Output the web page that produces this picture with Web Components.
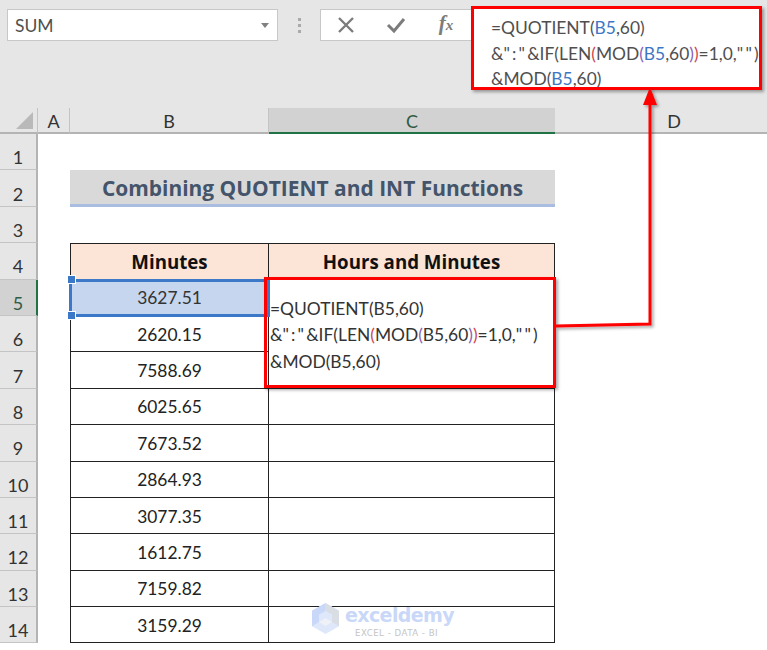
<!DOCTYPE html>
<html>
<head>
<meta charset="utf-8">
<style>
  html, body { margin: 0; height: 100%; overflow: hidden; background: #fff; }
  body { font-family: Lato, "Open Sans", sans-serif; color: #222; }
</style>
</head>
<body>
<xl-app>
  <xl-formula-bar name="SUM"></xl-formula-bar>
  <xl-sheet></xl-sheet>
</xl-app>

<script>
const formulaLines = `
<span><span>=QUOTIENT(</span><b class="ref">B5</b><span>,60)</span></span>
<span><span>&amp;<u>":"</u>&amp;IF(LEN</span><b class="p1">(</b><span>MOD</span><b class="p2">(</b><b class="ref">B5</b><span>,60</span><b class="p2">)</b><b class="p1">)</b><span>=1,0,<u>""</u>)</span></span>
<span><span>&amp;MOD(</span><b class="ref">B5</b><span>,60)</span></span>
`

const appTemplate = document.createElement('template')
appTemplate.innerHTML = `
<style>
  :host { display: block; width: 767px; height: 650px; overflow: hidden; position: relative; }
</style>
<slot></slot>
`

/**
 * Outer frame of the window.
 */
class XlApp extends HTMLElement {
  constructor () {
    super()
    this.attachShadow({ mode: 'open' })
    this.shadowRoot.appendChild(appTemplate.content.cloneNode(true))
  }
}

const barTemplate = document.createElement('template')
barTemplate.innerHTML = `
<style>
  :host {
    display: flex; align-items: flex-start; height: 108px; box-sizing: border-box;
    padding: 9px 0 0 7px; background: #e6e6e6; position: relative;
  }
  .namebox {
    width: 271px; height: 32px; box-sizing: border-box; background: #fff; border: 1px solid #c8c8c8;
    display: flex; align-items: center; justify-content: space-between; padding: 0 8px 0 7px;
    font-size: 17.5px; color: #4f4f4f;
  }
  .caret { width: 0; height: 0; border: 4px solid transparent; border-top: 5px solid #808080; border-bottom: 0; }
  .dots { width: 42px; display: flex; flex-direction: column; align-items: center; gap: 3px; padding-top: 9px; }
  .dots i { width: 3px; height: 3px; background: #aaa; }
  .buttons {
    width: 152px; height: 32px; box-sizing: border-box; background: #fff; border: 1px solid #c8c8c8; border-right: 0;
    display: flex; align-items: center; gap: 30px; padding-left: 15px;
  }
  .buttons svg { display: block; width: 20px; height: 20px; }
  .fx { font: italic 700 21px/20px "Liberation Serif", serif; color: #7c7c7c; width: 20px; text-align: center; margin-top: -2px; }
  .fx small { font-size: 15px; }
  .formula {
    width: 288px; height: 82px; box-sizing: border-box; margin-top: -1px; background: #fff; padding: 7px 0 0 19px;
    display: flex; flex-direction: column; font-size: 17.4px; line-height: 25.6px; color: #4f4f4f; position: relative;
  }
  #lines > span { white-space: nowrap; display: block; }
  .formula b { font-weight: 400; }
  u { text-decoration: none; letter-spacing: 2.2px; }
  .ref { color: #3d77c4; }
  .p1 { color: #d0454f; }
  .p2 { color: #8a5fb8; }
  .outline {
    position: absolute; left: -1px; top: -2px; right: -2px; bottom: 0; border: 3px solid #f00;
    box-shadow: 2px 2px 3px rgba(0, 0, 0, .35);
  }
</style>
<div class="namebox"><span id="name"></span><i class="caret"></i></div>
<div class="dots"><i></i><i></i><i></i></div>
<div class="buttons">
  <svg viewBox="0 0 20 20"><path d="M3 3 L17 17 M17 3 L3 17" stroke="#7c7c7c" stroke-width="2.4" fill="none"/></svg>
  <svg viewBox="0 0 20 20"><path d="M2 10 L8 16 L18 4" stroke="#7c7c7c" stroke-width="3" fill="none"/></svg>
  <span class="fx">f<small>x</small></span>
</div>
<div class="formula"><div id="lines" style="display:contents"></div><div class="outline"></div></div>
`

/**
 * Name box, buttons and the expanded formula field with its red outline.
 */
class XlFormulaBar extends HTMLElement {
  constructor () {
    super()
    this.attachShadow({ mode: 'open' })
    this.shadowRoot.appendChild(barTemplate.content.cloneNode(true))
  }

  connectedCallback () {
    this.shadowRoot.querySelector('#name').textContent = this.getAttribute('name')
    this.shadowRoot.querySelector('#lines').innerHTML = formulaLines
  }
}

const sheetTemplate = document.createElement('template')
sheetTemplate.innerHTML = `
<style>
  :host {
    display: grid; position: relative; height: 542px; background: #fff;
    grid-template-columns: 38px 32px 199px 286px 238px;
    grid-template-rows: 26px repeat(14, 36.4px);
    font-size: 17.4px; color: #222;
  }
  .col, .row {
    background: #e6e6e6; display: flex; align-items: center; justify-content: center;
    box-sizing: border-box; font-size: 18px; color: #333;
  }
  .col { border-right: 1px solid #c4c4c4; border-bottom: 2px solid #b4b4b4; padding-top: 2px; }
  .col.on { background: #d2d2d2; border-bottom: 2px solid #217346; color: #2f5b45; border-right: 0; }
  .row { grid-column: 1; border-bottom: 1px solid #c4c4c4; border-right: 2px solid #b4b4b4; font-size: 18px; padding-top: 11px; }
  .row.on { background: #d2d2d2; border-right: 2px solid #217346; color: #2f5b45; }
  .corner { background: #e6e6e6; border-right: 1px solid #c4c4c4; border-bottom: 2px solid #b4b4b4; box-sizing: border-box; position: relative; }
  .corner::after {
    content: ''; position: absolute; right: 4px; bottom: 3px; width: 0; height: 0;
    border-left: 17px solid transparent; border-bottom: 17px solid #b9b9b9;
  }
  .title {
    grid-column: 3 / 5; grid-row: 3; background: #d9d9d9; border-bottom: 3px solid #a9bde0;
    box-sizing: border-box; display: flex; align-items: center; justify-content: center; padding-top: 1px;
    font-family: "Open Sans", sans-serif; font-weight: 700; font-size: 20.95px; color: #44546a;
  }
  .cell {
    box-sizing: border-box; display: flex; align-items: center; justify-content: center;
    border-right: 1.5px solid #222; border-bottom: 1.5px solid #222; padding-top: 1px;
  }
  .cell.b { grid-column: 3; border-left: 1.5px solid #222; }
  .cell.c { grid-column: 4; }
  .cell.top { border-top: 1.5px solid #222; }
  .head { background: #fce4d6; font-family: "Open Sans", sans-serif; font-weight: 700; font-size: 18.7px; color: #111; }
  .sel { background: #c6d6ee; outline: 3px solid #3c78c8; outline-offset: -2px; border-color: transparent; position: relative; color: #333; }
  .sel i { position: absolute; left: -4px; width: 7px; height: 7px; background: #3c78c8; border: 1px solid #fff; z-index: 2; }
  .sel i.t { top: -5px; }
  .sel i.u { bottom: -5px; }
  .merged {
    grid-column: 4; grid-row: 6 / 9; align-items: flex-start; flex-direction: column; justify-content: center;
    font-size: 17.4px; line-height: 26.4px; padding: 4px 0 0 1px; position: relative; color: #333;
    border-right: 1.5px solid #222; border-bottom: 1.5px solid #222; box-sizing: border-box; display: flex;
  }
  .merged > span { white-space: nowrap; display: block; }
  .merged b { font-weight: 400; }
  u { text-decoration: none; letter-spacing: 2.2px; }
  .p1 { color: #d0454f; }
  .p2 { color: #8a5fb8; }
  .outline {
    position: absolute; left: -5px; right: -2px; top: -3px; bottom: 0; border: 3px solid #f00; z-index: 3;
    box-shadow: 2px 2px 3px rgba(0, 0, 0, .35);
  }
  .arrow { position: absolute; left: 540px; top: -30px; width: 130px; z-index: 4; height: 270px; }
  .mark { position: absolute; left: 312px; top: 495px; display: flex; gap: 6px; align-items: flex-start; z-index: 1; pointer-events: none; }
  .mark svg { width: 27px; height: 31px; display: block; }
  .mark .t { display: flex; flex-direction: column; align-items: center; line-height: 1; margin-top: 1px; }
  .mark .n { font: 700 19px "DejaVu Sans", sans-serif; color: #c9d8f8; letter-spacing: -.6px; }
  .mark .s { font: 400 8.6px "DejaVu Sans", sans-serif; color: #c4c4c4; letter-spacing: .5px; margin: 2px 6px 0 0; white-space: nowrap; }
</style>
<div class="corner"></div>
<div class="col">A</div><div class="col">B</div><div class="col on">C</div><div class="col" style="border-right:0">D</div>
<svg class="arrow" viewBox="0 0 130 270">
  <defs><filter id="sh" x="-20%" y="-20%" width="140%" height="140%"><feDropShadow dx="2" dy="2" stdDeviation="1.5" flood-opacity=".35"/></filter></defs>
  <g filter="url(#sh)">
    <path d="M16 248 L110 246 L110 24" fill="none" stroke="#f00" stroke-width="3"/>
    <path d="M103 27 L110 9 L117 27 Z" fill="#f00"/>
  </g>
</svg>
<div class="mark">
  <svg viewBox="0 0 27 31">
    <path d="M13.5 0 L27 7.7 L27 23.2 L13.5 31 L0 23.2 L0 7.7 Z" fill="#dfe8fb"/>
    <path d="M13.5 0 L27 7.7 L27 23.2 L20 19 L20 11.5 L13.5 8 Z" fill="#d9dde4"/>
    <path d="M0 7.7 L13.5 0 L13.5 8 L7 11.5 L7 19 L0 23.2 Z" fill="#c9d8f8"/>
    <path d="M7 19 L13.5 15 L20 19 L13.5 23 Z" fill="#eef1f6"/>
  </svg>
  <div class="t"><span class="n">exceldemy</span><span class="s">EXCEL - DATA - BI</span></div>
</div>
`

const minutes = ['3627.51', '2620.15', '7588.69', '6025.65', '7673.52', '2864.93', '3077.35', '1612.75', '7159.82', '3159.29']

/**
 * Headings and cells of the worksheet, built from the minutes list.
 */
class XlSheet extends HTMLElement {
  constructor () {
    super()
    this.attachShadow({ mode: 'open' })
    this.shadowRoot.appendChild(sheetTemplate.content.cloneNode(true))
  }

  #add (className, text, style) {
    const el = document.createElement('div')
    el.className = className
    if (text) el.textContent = text
    if (style) el.style.cssText = style
    this.shadowRoot.appendChild(el)
    return el
  }

  connectedCallback () {
    for (let i = 1; i <= 14; i++) {
      this.#add(i === 5 ? 'row on' : 'row', String(i), `grid-row:${i + 1}`)
    }
    this.#add('title', 'Combining QUOTIENT and INT Functions')
    this.#add('cell b top head', 'Minutes', 'grid-row:5')
    this.#add('cell c top head', 'Hours and Minutes', 'grid-row:5')

    minutes.forEach((value, i) => {
      const cell = this.#add(i === 0 ? 'cell b sel' : 'cell b', value, `grid-row:${i + 6}`)
      if (i === 0) {
        cell.insertAdjacentHTML('beforeend', '<i class="t"></i><i class="u"></i>')
      }
      if (i > 2) this.#add('cell c', '', `grid-row:${i + 6}`)
    })

    const merged = this.#add('merged')
    merged.innerHTML = formulaLines.replaceAll('class="ref"', '') + '<div class="outline"></div>'
  }
}

customElements.define('xl-app', XlApp)
customElements.define('xl-formula-bar', XlFormulaBar)
customElements.define('xl-sheet', XlSheet)
</script>
</body>
</html>
